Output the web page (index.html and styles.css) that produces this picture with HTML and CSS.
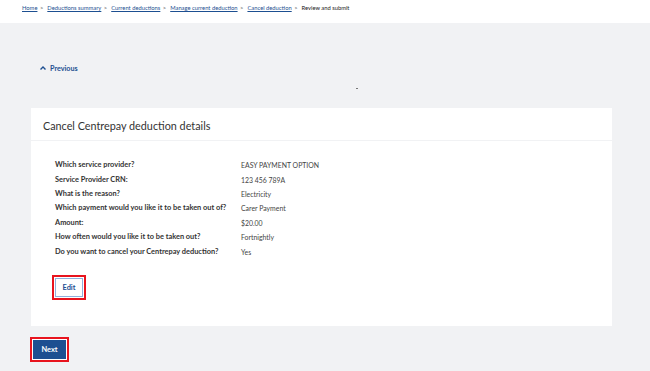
FILE: index.html
```html
<!DOCTYPE html>
<html>
<head>
    <meta charset="UTF-8">
    <title>Review and submit</title>
    <link rel="stylesheet" href="styles.css">
</head>
<body>
<div class="crumbs">
    <a href="javascript:;">Home</a><span class="sep">&gt;</span>
    <a href="javascript:;">Deductions summary</a><span class="sep">&gt;</span>
    <a href="javascript:;">Current deductions</a><span class="sep">&gt;</span>
    <a href="javascript:;">Manage current deduction</a><span class="sep">&gt;</span>
    <a href="javascript:;">Cancel deduction</a><span class="sep">&gt;</span>
    <span class="here">Review and submit</span>
</div>

<div class="main">
    <a href="javascript:;" class="prev">
        <svg width="6" height="4" viewBox="0 0 6 4"><path d="M0.5 3.5 L3 1 L5.5 3.5" fill="none" stroke="#1d4f91" stroke-width="1.4"/></svg>
        Previous
    </a>
    <div class="dotRow"><span class="dot"></span></div>

    <div class="card">
        <h2 class="cardHead">Cancel Centrepay deduction details</h2>
        <div class="cardBody">
            <dl class="details">
                <dt>Which service provider?</dt><dd>EASY PAYMENT OPTION</dd>
                <dt>Service Provider CRN:</dt><dd>123 456 789A</dd>
                <dt>What is the reason?</dt><dd>Electricity</dd>
                <dt>Which payment would you like it to be taken out of?</dt><dd>Carer Payment</dd>
                <dt>Amount:</dt><dd>$20.00</dd>
                <dt>How often would you like it to be taken out?</dt><dd>Fortnightly</dd>
                <dt>Do you want to cancel your Centrepay deduction?</dt><dd>Yes</dd>
            </dl>
            <a href="javascript:;" class="btn btnEdit">Edit</a>
        </div>
    </div>

    <a href="javascript:;" class="btn btnNext">Next</a>
</div>
</body>
</html>
```

FILE: styles.css
```css
body, div, h2, dl, dt, dd, a {
    margin: 0;
    padding: 0;
}

body {
    font-family: Lato, "Liberation Sans", sans-serif;
    color: #333;
    background: #f1f2f4;
}

a {
    color: #1d4f91;
}

/*面包屑*/
.crumbs {
    box-sizing: border-box;
    height: 23px;
    padding: 3px 0 0 22px;
    background: #fff;
    font-size: 5.8px;
    line-height: 10px;
    white-space: nowrap;
}

.crumbs a {
    color: #1d4f91;
    text-decoration: underline;
}

.crumbs .sep {
    margin: 0 2.5px;
    color: #555;
}

.crumbs .here {
    color: #222;
}

/*主体*/
.main {
    box-sizing: border-box;
    height: 348px;
    padding: 40px 38px 0 31px;
}

.prev {
    display: flex;
    align-items: center;
    gap: 4px;
    margin-left: 9px;
    height: 10px;
    font-size: 7.2px;
    font-weight: 700;
    text-decoration: none;
}

.dotRow {
    height: 35px;
    display: flex;
    align-items: center;
    justify-content: center;
    padding-left: 70px;
}

.dot {
    width: 2px;
    height: 1px;
    background: #777;
    margin-top: -5px;
}

/*卡片*/
.card {
    background: #fff;
}

.cardHead {
    box-sizing: border-box;
    height: 33px;
    padding: 11px 0 0 12px;
    font-size: 10.8px;
    font-weight: 400;
    line-height: 14px;
    color: #333;
    border-bottom: 1px solid #f1f2f4;
}

.cardBody {
    padding: 17px 0 29px 24px;
}

.details {
    display: grid;
    grid-template-columns: 186px auto;
    grid-auto-rows: 14.4px;
    align-items: center;
    font-size: 7.4px;
    line-height: 10px;
    margin-bottom: 19px;
}

.details dt {
    font-weight: 700;
    color: #333;
}

.details dd {
    font-size: 6.9px;
    color: #444;
}

/*按钮*/
.btn {
    display: flex;
    align-items: center;
    justify-content: center;
    box-sizing: border-box;
    text-decoration: none;
    font-size: 7.4px;
    font-weight: 700;
    box-shadow: 0 0 0 1px #fff, 0 0 0 3px #e8141e;
}

.btnEdit {
    width: 28px;
    height: 19px;
    background: #fff;
    border: 1px solid #8fb1dd;
    color: #1d4f91;
}

.btnNext {
    margin: 14px 0 0 2px;
    width: 33px;
    height: 19px;
    background: #1d4f91;
    color: #fff;
    font-weight: 700;
}
```
